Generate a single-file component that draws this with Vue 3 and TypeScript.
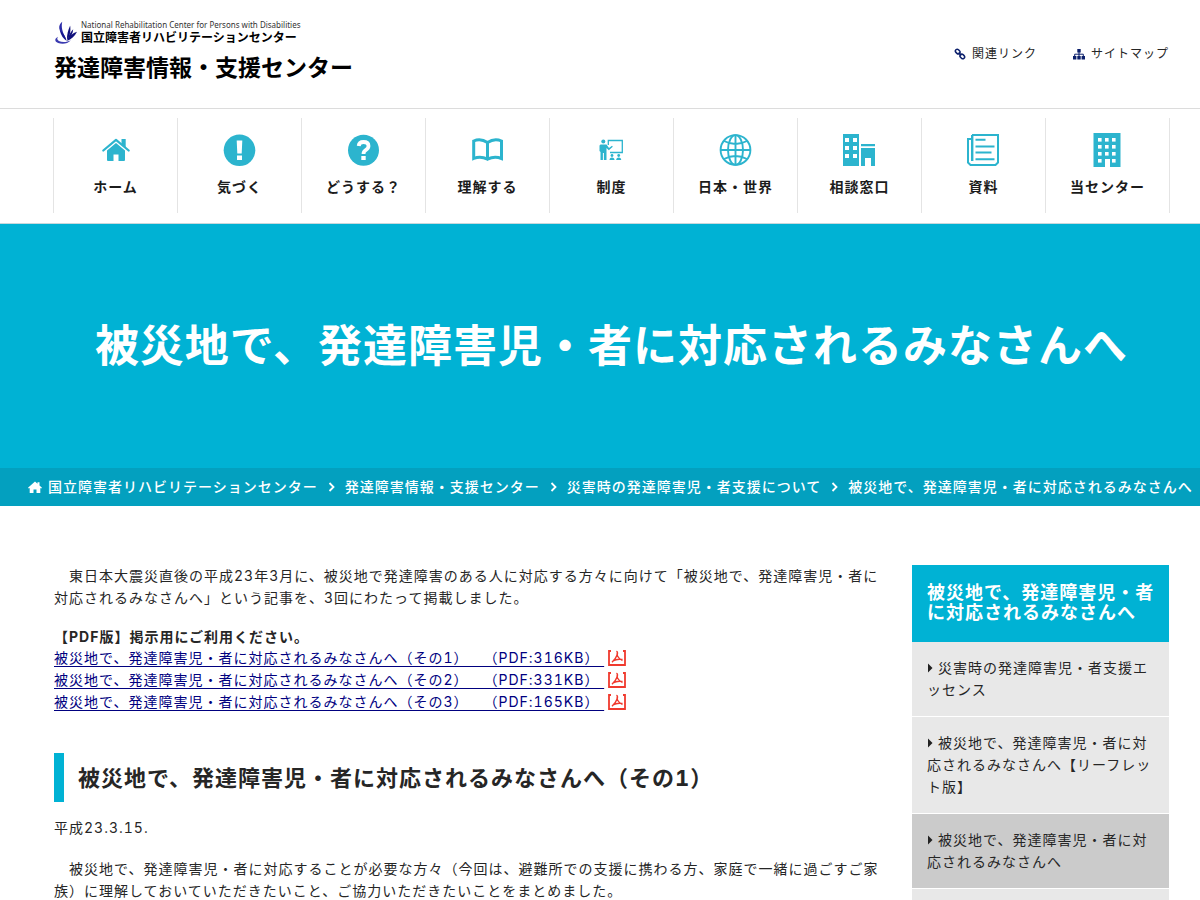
<script setup lang="ts">
interface NavItem {
  label: string
  icon: string
}

const navItems: NavItem[] = [
  { label: 'ホーム', icon: 'home' },
  { label: '気づく', icon: 'notice' },
  { label: 'どうする？', icon: 'question' },
  { label: '理解する', icon: 'book' },
  { label: '制度', icon: 'lecture' },
  { label: '日本・世界', icon: 'globe' },
  { label: '相談窓口', icon: 'building' },
  { label: '資料', icon: 'paper' },
  { label: '当センター', icon: 'office' },
]

const crumbs: string[] = [
  '国立障害者リハビリテーションセンター',
  '発達障害情報・支援センター',
  '災害時の発達障害児・者支援について',
]

const pageTitle = '被災地で、発達障害児・者に対応されるみなさんへ'

const pdfs = [
  { part: 1, size: '316KB' },
  { part: 2, size: '331KB' },
  { part: 3, size: '165KB' },
]

const sideLinks = [
  { label: '災害時の発達障害児・者支援エッセンス', current: false },
  { label: '被災地で、発達障害児・者に対応されるみなさんへ【リーフレット版】', current: false },
  { label: pageTitle, current: true },
]

const windowRows = [4, 12, 20]
const officeRows = [4, 11, 18, 25]
const officeCols = [7, 14, 21]
</script>

<template>
  <div class="page">
    <header class="header">
      <a class="logo" href="#">
        <span class="logo-top">
          <svg class="emblem" viewBox="0 0 67 67" aria-hidden="true">
            <path d="M24 2C10 14 12 28 34 50C25 32 20 18 24 2Z" fill="#2a2aa8" />
            <path d="M17 27C20 42 27 52 37 58C34 46 28 36 17 27Z" fill="#14148c" />
            <path d="M47 14C41 26 37 40 38 56C45 46 50 30 47 14Z" fill="#10107c" />
            <path d="M56 24C48 32 42 42 39 57C48 48 55 38 56 24Z" fill="#10107c" />
            <path d="M67 31C54 35 44 44 38 58C50 54 60 44 67 31Z" fill="#10107c" />
            <path d="M12 46C2 50 0 60 12 64C24 68 40 67 49 56C38 62 24 63 14 58C9 55 8 50 12 46Z" fill="#3a3ab0" />
          </svg>
          <span class="logo-names">
            <span class="logo-en">National Rehabilitation Center for Persons with Disabilities</span>
            <span class="logo-ja">国立障害者リハビリテーションセンター</span>
          </span>
        </span>
        <span class="logo-main">発達障害情報・支援センター</span>
      </a>
      <nav class="util" aria-label="補助">
        <a href="#">
          <svg viewBox="0 0 12 12" aria-hidden="true">
            <g fill="none" stroke="#0b1f6b" stroke-width="1.5">
              <rect x="1.200" y="1.800" width="5" height="3.600" rx="1.800" transform="rotate(45 3.700 3.600)" />
              <rect x="5.800" y="6.600" width="5" height="3.600" rx="1.800" transform="rotate(45 8.300 8.400)" />
              <path d="M4.600 4.600l2.800 2.800" />
            </g>
          </svg>関連リンク</a>
        <a href="#">
          <svg viewBox="0 0 12 12" aria-hidden="true">
            <path d="M4.300 1h3.400v3.400H4.300zM0 8h3.400v3.400H0zM4.300 8h3.400v3.400H4.300zM8.600 8H12v3.400H8.600z" fill="#0b1f6b" />
            <path d="M6 4v4M1.700 8V6.200h8.600V8" fill="none" stroke="#0b1f6b" />
          </svg>サイトマップ</a>
      </nav>
    </header>

    <nav class="global" aria-label="メイン">
      <ul>
        <li v-for="item in navItems" :key="item.label">
          <a href="#">
            <svg viewBox="-1 -1 34 34" aria-hidden="true">
              <g v-if="item.icon === 'home'">
                <path d="M21.500 5h4.200v9l-4.200-3.800z" fill="currentColor" />
                <path d="M3.300 16.500L16 5.800l12.700 10.700" fill="none" stroke="currentColor" stroke-width="2.200" stroke-linecap="round" stroke-linejoin="round" />
                <path d="M7 16.500L16 9l9 7.500V26q0 1-1 1h-5.500v-6.500h-5V27H8q-1 0-1-1z" fill="currentColor" />
              </g>
              <g v-else-if="item.icon === 'notice'">
                <circle cx="15.500" cy="16.300" r="15.800" fill="currentColor" />
                <path d="M12.700 6.500h5.600l-.6 13h-4.400zM13 21.500h5v4.500h-5z" fill="#fff" />
              </g>
              <g v-else-if="item.icon === 'question'">
                <circle cx="15.500" cy="16.300" r="15.500" fill="currentColor" />
                <path d="M10.700 12Q11 8 15.500 8Q20.500 8 20.500 12Q20.500 14.300 18 15.800Q15.500 17.300 15.500 20" fill="none" stroke="#fff" stroke-width="3.800" />
                <path d="M13.300 22h4.400v4h-4.400z" fill="#fff" />
              </g>
              <path v-else-if="item.icon === 'book'" d="M15.500 8.500Q8.500 3.800 1.700 7V24.500Q8.500 21.500 15.500 25.200Q22.500 21.500 29.500 24.500V7Q22.500 3.800 15.500 8.500V24" fill="none" stroke="currentColor" stroke-width="3" />
              <g v-else-if="item.icon === 'lecture'">
                <circle cx="7.300" cy="7.500" r="2" fill="currentColor" />
                <path d="M4.500 10.500h6l2.500 3.500 3-2.300.8 1-4 3.600-2.300-2.300v12H7.900v-7h-1v7H4.500v-8l-1-1v-5.500z" fill="currentColor" />
                <path d="M12.300 11V6.500h14v12H14" fill="none" stroke="currentColor" stroke-width="1.300" />
                <circle cx="16" cy="21.500" r="1.400" fill="currentColor" />
                <circle cx="22.700" cy="21.500" r="1.400" fill="currentColor" />
                <path d="M13.500 26q0-2.500 2.500-2.500T18.500 26zM20.200 26q0-2.500 2.500-2.500T25.200 26z" fill="currentColor" />
              </g>
              <g v-else-if="item.icon === 'globe'" fill="none" stroke="currentColor" stroke-width="1.900">
                <circle cx="15.500" cy="16" r="14.900" />
                <ellipse cx="15.500" cy="16" rx="7.500" ry="14.900" />
                <path d="M15.500 1v30M.5 16h30M4 7Q15.500 13 27 7M4 25Q15.500 19 27 25" />
              </g>
              <g v-else-if="item.icon === 'building'">
                <path d="M-1 0h16v32H-1zM17 10h14v2.200H17zM17 14h14v18h-4v-8h-6v8h-4z" fill="currentColor" />
                <template v-for="y in windowRows" :key="y">
                  <rect x="1" :y="y" width="4" height="4" fill="#fff" />
                  <rect x="9" :y="y" width="4" height="4" fill="#fff" />
                </template>
              </g>
              <g v-else-if="item.icon === 'paper'" fill="none" stroke="currentColor">
                <path d="M4 1H30v27.500L27.500 31H2.500L0 28.500V5h3" stroke-width="2" />
                <path d="M4.200 1v26" stroke-width="2.400" />
                <path d="M7.500 5.800h10M7.500 12.500h19M7.500 18.500h16M7.500 25.200h19" stroke-width="1.900" />
              </g>
              <g v-else>
                <path d="M1.500-1h27v34h-10.500v-8h-5v8H1.500z" fill="currentColor" />
                <template v-for="y in officeRows" :key="y">
                  <rect v-for="x in officeCols" :key="x" :x="x - 1" :y="y" width="3.600" height="3.600" fill="#fff" />
                </template>
              </g>
            </svg>
            <span>{{ item.label }}</span>
          </a>
        </li>
      </ul>
    </nav>

    <section class="hero">
      <h1>{{ pageTitle }}</h1>
    </section>

    <nav class="crumbs" aria-label="パンくず">
      <svg class="crumb-home" viewBox="0 0 14 12" aria-hidden="true">
        <path d="M7 .5L9.500 2.700V1.300h2v3.200L14 6.800l-.8.8-.9-.7V12H8.500V8.500h-3V12H1.700V6.900l-.9.7L0 6.800z" fill="#fff" />
      </svg>
      <ol>
        <li v-for="crumb in crumbs" :key="crumb">
          <a href="#">{{ crumb }}</a>
          <svg class="chevron" viewBox="0 0 27 10" aria-hidden="true">
            <path d="M11.500 1L15.500 5l-4 4" fill="none" stroke="#fff" stroke-width="1.800" />
          </svg>
        </li>
        <li aria-current="page">{{ pageTitle }}</li>
      </ol>
    </nav>

    <div class="body">
      <main>
        <p>　東日本大震災直後の平成23年3月に、被災地で発達障害のある人に対応する方々に向けて「被災地で、発達障害児・者に対応されるみなさんへ」という記事を、3回にわたって掲載しました。</p>
        <p class="lead">【PDF版】掲示用にご利用ください。</p>
        <ul class="pdfs">
          <li v-for="pdf in pdfs" :key="pdf.part">
            <a href="#">{{ pageTitle }}（その{{ pdf.part }}）　（PDF:{{ pdf.size }}）&nbsp;</a>
            <svg viewBox="0 0 18 16" aria-hidden="true">
              <path d="M3 1H1v14h16V1h-2" fill="none" stroke="#f03a2e" stroke-width="1.800" />
              <path d="M8.300 1.500Q10 1.500 9.300 4.500Q8 8.500 4 12.300M8.800 3.500Q9.500 8 14.500 10.500M5 11Q9 8.500 14.500 9.500" fill="none" stroke="#f03a2e" stroke-width="1.400" />
            </svg>
          </li>
        </ul>
        <h2>{{ pageTitle }}（その1）</h2>
        <p class="date">平成23.3.15.</p>
        <p>　被災地で、発達障害児・者に対応することが必要な方々（今回は、避難所での支援に携わる方、家庭で一緒に過ごすご家族）に理解しておいていただきたいこと、ご協力いただきたいことをまとめました。</p>
      </main>

      <aside>
        <h2>{{ pageTitle }}</h2>
        <ul>
          <li v-for="link in sideLinks" :key="link.label" :class="{ current: link.current }">
            <a href="#"><svg viewBox="0 0 11 10" aria-hidden="true"><path d="M1 0.500L5.500 5L1 9.500z" fill="#222" /></svg>{{ link.label }}</a>
          </li>
        </ul>
      </aside>
    </div>
  </div>
</template>

<style>
html {
  scrollbar-width: none;
}

body {
  margin: 0;
  background: #fff;
}
</style>

<style scoped>
.page {
  font-family: Inter, "Noto Sans CJK JP", sans-serif;
  font-size: 14px;
  font-variant-numeric: tabular-nums;
  line-height: 22px;
  letter-spacing: 1px;
  color: #262626;
  text-spacing-trim: space-all;
  line-break: normal;
  overflow-x: hidden;
}

ul,
ol {
  margin: 0;
  padding: 0;
  list-style: none;
}

p,
h1,
h2 {
  margin: 0;
}

a {
  color: inherit;
  text-decoration: none;
}

.header {
  display: flex;
  justify-content: space-between;
  align-items: center;
  box-sizing: border-box;
  min-height: 109px;
  padding: 0 31px 0 54px;
  border-bottom: 1px solid #dcdcdc;
}

.logo {
  display: flex;
  flex-direction: column;
  gap: 7px;
  padding-bottom: 6px;
  color: #000;
  letter-spacing: 0;
  white-space: nowrap;
}

.logo-top {
  display: flex;
  align-items: center;
  gap: 4px;
}

.emblem {
  width: 23px;
  height: 23px;
}

.logo-names {
  display: flex;
  flex-direction: column;
}

.logo-en {
  font-family: "Noto Sans", sans-serif;
  font-size: 8px;
  line-height: 11px;
  color: #333;
}

.logo-ja {
  font-size: 12px;
  font-weight: 700;
  line-height: 16px;
}

.logo-main {
  font-size: 23px;
  font-weight: 700;
  line-height: 30px;
}

.util {
  display: flex;
  gap: 36px;
  font-size: 12px;
}

.util a {
  display: flex;
  align-items: center;
  gap: 6px;
}

.util svg {
  width: 12px;
  height: 12px;
}

.global {
  padding: 9px 30px 10px 53px;
  border-bottom: 1px solid #c8d8dc;
}

.global ul {
  display: grid;
  grid-template-columns: repeat(9, 1fr);
  border-right: 1px solid #e4e4e4;
}

.global li {
  border-left: 1px solid #e4e4e4;
}

.global a {
  display: flex;
  flex-direction: column;
  align-items: center;
  gap: 9px;
  padding: 15px 0;
  font-weight: 700;
  color: #1c1c1c;
  white-space: nowrap;
}

.global svg {
  width: 34px;
  height: 34px;
  color: #2cb4ce;
}

.hero {
  display: flex;
  align-items: center;
  justify-content: center;
  min-height: 244px;
  padding: 0 31px 0 54px;
  background: #00b2d4;
}

.hero h1 {
  font-size: 44px;
  line-height: 60px;
  color: #fff;
  white-space: nowrap;
}

.crumbs {
  display: flex;
  align-items: center;
  gap: 6px;
  padding: 8px 0 8px 28px;
  background: #03a0bf;
  color: #fff;
  font-weight: 500;
  white-space: nowrap;
}

.crumbs ol,
.crumbs li {
  display: flex;
  align-items: center;
}

.crumb-home {
  flex: none;
  width: 14px;
  height: 12px;
}

.chevron {
  width: 27px;
  height: 10px;
}

.body {
  display: grid;
  grid-template-columns: 1fr 257px;
  gap: 28px;
  padding: 59px 31px 0 54px;
}

.lead {
  margin-top: 18px;
  font-weight: 700;
  line-height: 20px;
}

.pdfs li {
  display: flex;
  align-items: center;
  gap: 4px;
}

.pdfs a {
  color: #00007f;
  text-decoration: underline;
  text-decoration-skip-ink: none;
  text-underline-offset: 3px;
}

.pdfs svg {
  width: 18px;
  height: 16px;
}

main h2 {
  margin: 40px 0 15px;
  padding: 10px 0 9px 14px;
  border-left: 10px solid #00b2d4;
  font-size: 22px;
  line-height: 30px;
}

.date {
  margin-bottom: 19px;
}

aside {
  background: #e8e8e8;
}

aside h2 {
  padding: 18px 10px 19px 15px;
  background: #00b2d4;
  color: #fff;
  font-size: 18px;
  line-height: 20px;
}

aside li {
  padding: 15px;
  border-bottom: 1px solid #fff;
}

aside .current {
  background: #cbcbcb;
}

aside svg {
  width: 11px;
  height: 10px;
}
</style>
